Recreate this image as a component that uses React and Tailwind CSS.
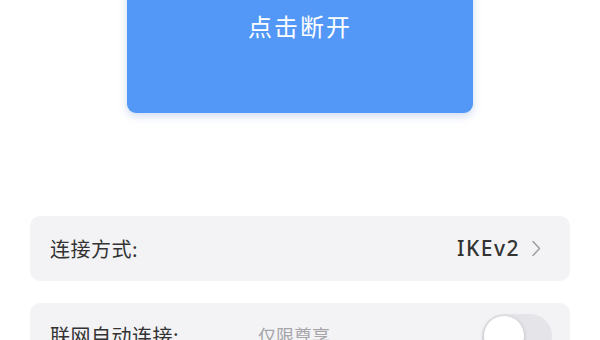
export default function App() {
  const font = { fontFamily: '"Noto Sans CJK SC", "Noto Sans", sans-serif' };
  return (
    <div className="w-[600px] h-[340px] overflow-hidden bg-white" style={font}>
      <div className="mx-auto mt-[-20px] w-[346px] h-[133px] rounded-[9px] bg-[#5398f7] shadow-[0_3px_8px_rgba(60,110,200,0.25)] flex flex-col items-center pt-[30px]">
        <span className="text-white text-[24px] leading-[32px] tracking-[2px]">点击断开</span>
      </div>
      <div className="mx-[30px] mt-[103px] h-[65px] rounded-[10px] bg-[#f3f3f6] flex items-center pl-[20px] pr-[29px]">
        <span className="text-[20px] text-[#333] flex-1 tracking-[0.5px]">连接方式:</span>
        <span className="text-[21px] text-[#333] font-medium tracking-[1.5px]" style={{ fontFamily: '"Noto Sans", sans-serif' }}>IKEv2</span>
        <svg className="ml-[11px]" width="10" height="17" viewBox="0 0 10 17" fill="none">
          <path d="M2 1.5 L8.5 8.5 L2 15.5" stroke="#9a9aa0" strokeWidth="1.4" strokeLinecap="round" strokeLinejoin="round" />
        </svg>
      </div>
      <div className="mx-[30px] mt-[22px] h-[65px] rounded-[10px] bg-[#f3f3f6] flex items-center pl-[20px] pr-[18px]">
        <span className="text-[20px] text-[#333] w-[208px] tracking-[0.5px]">联网自动连接:</span>
        <span className="text-[18px] text-[#a5a5aa] flex-1">仅限尊享</span>
        <div className="relative w-[70px] h-[44px] rounded-full bg-[#e4e4e9]">
          <div className="absolute left-[2px] top-[2px] w-[40px] h-[40px] rounded-full bg-white shadow-[0_1px_4px_rgba(0,0,0,0.2)]"></div>
        </div>
      </div>
    </div>
  );
}
